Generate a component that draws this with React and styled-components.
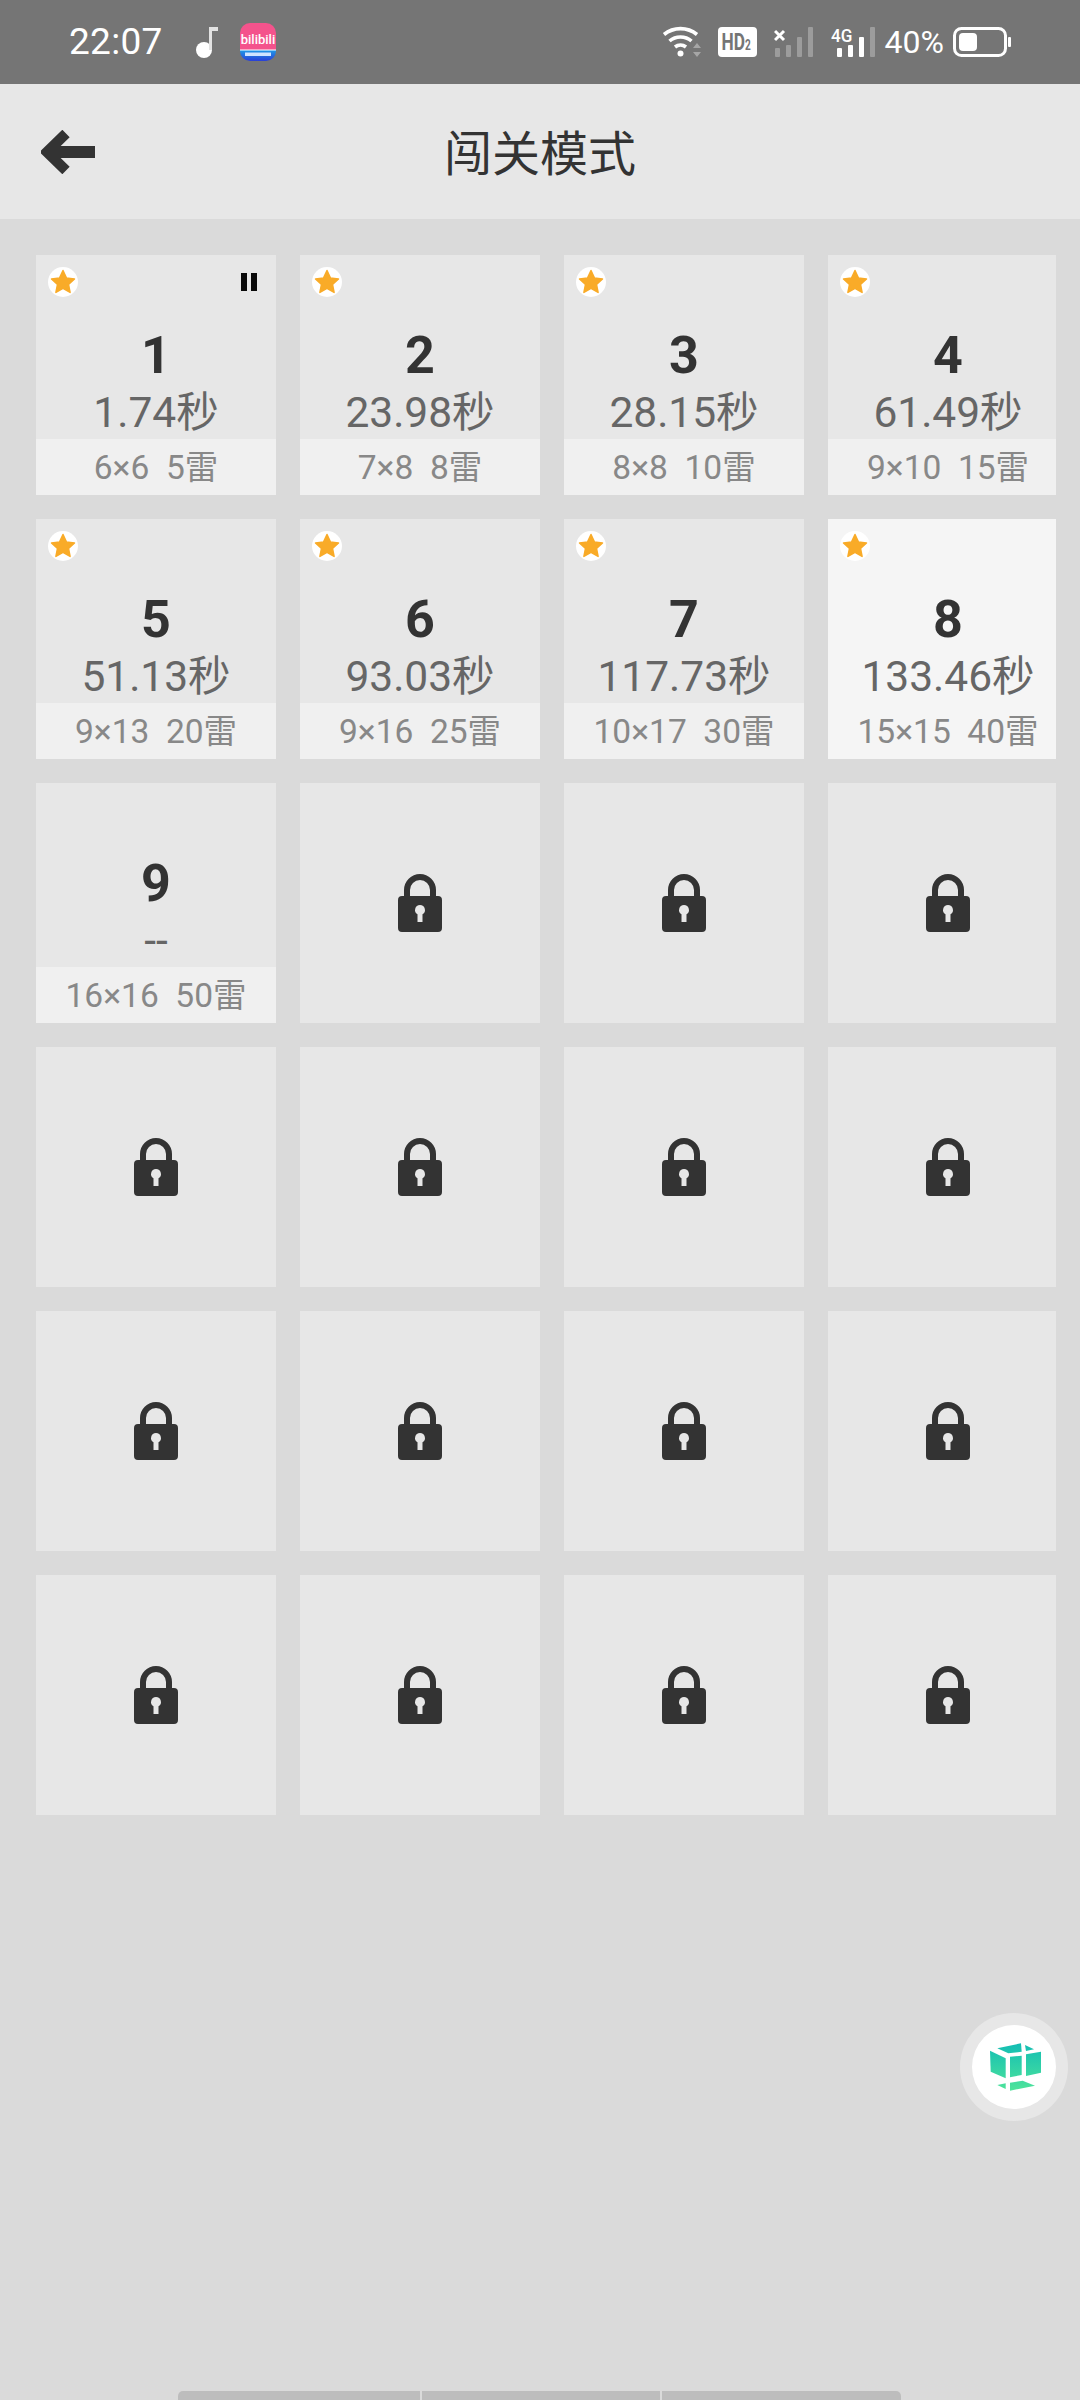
import React from "react";
import styled, { createGlobalStyle } from "styled-components";

const GlobalStyle = createGlobalStyle`
  html, body { margin: 0; padding: 0; background: #dadada; }
  * { box-sizing: border-box; }
  body { font-family: Roboto, "Noto Sans CJK SC", sans-serif; }
`;

const Page = styled.div`
  position: relative;
  width: 1080px;
  height: 2400px;
  display: flex;
  flex-direction: column;
  background: #dadada;
  overflow: hidden;
`;

const StatusBar = styled.div`
  height: 84px;
  flex: none;
  background: #757575;
  color: #fff;
  display: flex;
  align-items: center;
  justify-content: space-between;
  padding: 0 69px 0 69px;
`;

const StatusGroup = styled.div`
  display: flex;
  align-items: center;
`;

const Clock = styled.span`
  font-size: 37px;
  line-height: 84px;
  width: 127px;
  letter-spacing: 0.3px;
`;

const Percent = styled.span`
  font-size: 32px;
  margin: 0 9px 0 10px;
`;

const Header = styled.div`
  height: 135px;
  flex: none;
  background: #e7e7e7;
  display: grid;
  grid-template-columns: 1fr auto 1fr;
  align-items: center;
  padding: 0 41px;
`;

const Title = styled.div`
  font-size: 48px;
  color: #333;
  line-height: 133px;
  height: 135px;
  font-family: "Noto Sans CJK SC", sans-serif;
`;

const Grid = styled.div`
  width: 1020px;
  margin: 36px 0 0 36px;
  display: grid;
  grid-template-columns: repeat(4, 240px);
  grid-auto-rows: 240px;
  gap: 24px;
  overflow: hidden;
`;

const Card = styled.div`
  position: relative;
  width: 240px;
  height: 240px;
  display: flex;
  flex-direction: column;
  align-items: center;
  justify-content: ${(p) => (p.$locked ? "center" : "flex-start")};
  padding-top: ${(p) => (p.$locked ? 0 : 70)}px;
  background: ${(p) => (p.$active ? "#f5f5f5" : "#e7e7e7")};
  text-align: center;
`;

const Badge = styled.div`
  position: absolute;
  left: 12px;
  top: 12px;
  width: 30px;
  height: 30px;
  border-radius: 50%;
  background: #fff;
  display: flex;
  align-items: center;
  justify-content: center;
`;

const Pause = styled.div`
  position: absolute;
  left: 205px;
  top: 18px;
  width: 16px;
  height: 18px;
  border-left: 6px solid #0a0a0a;
  border-right: 6px solid #0a0a0a;
`;

const Num = styled.div`
  font-size: 52px;
  font-weight: 700;
  line-height: 62px;
  color: #333;
`;

const Time = styled.div`
  font-size: 42.5px;
  line-height: 52px;
  height: 52px;
  color: #666;
  white-space: nowrap;
`;

const Band = styled.div`
  height: 56px;
  width: 100%;
  background: ${(p) => (p.$active ? "#f5f5f5" : "#f0f0f0")};
  color: #888;
  font-size: 33.5px;
  line-height: 58px;
  white-space: pre;
`;

const FloatButton = styled.div`
  position: absolute;
  left: 960px;
  top: 2013px;
  width: 108px;
  height: 108px;
  border-radius: 50%;
  background: #e7e7e7;
  display: flex;
  align-items: center;
  justify-content: center;
`;

const FloatInner = styled.div`
  width: 84px;
  height: 84px;
  border-radius: 50%;
  background: #fff;
  display: flex;
  align-items: center;
  justify-content: center;
`;

const HomeBar = styled.div`
  margin: auto 0 0 178px;
  width: 723px;
  height: 9px;
  flex: none;
  display: grid;
  grid-template-columns: 242px 238px 1fr;
  gap: 2px;
  border-radius: 5px 5px 0 0;
  overflow: hidden;
`;

const HomeSegment = styled.div`
  background: #bdbdbd;
`;

const Spaced = styled.svg`
  display: block;
  flex: none;
  margin-left: ${(p) => p.$ml || 0}px;
`;

const levels = [
  { n: 1, time: "1.74秒", info: "6×6  5雷", star: true, paused: true },
  { n: 2, time: "23.98秒", info: "7×8  8雷", star: true },
  { n: 3, time: "28.15秒", info: "8×8  10雷", star: true },
  { n: 4, time: "61.49秒", info: "9×10  15雷", star: true },
  { n: 5, time: "51.13秒", info: "9×13  20雷", star: true },
  { n: 6, time: "93.03秒", info: "9×16  25雷", star: true },
  { n: 7, time: "117.73秒", info: "10×17  30雷", star: true },
  { n: 8, time: "133.46秒", info: "15×15  40雷", star: true, active: true },
  { n: 9, time: "--", info: "16×16  50雷" },
];

const Star = () => (
  <svg width="26" height="26" viewBox="0 0 26 26">
    <path
      d="M13 1.5l3.4 7.4 8.1 1-6 5.5 1.6 8-7.1-4-7.1 4 1.6-8-6-5.5 8.1-1z"
      fill="#f9ab28"
      stroke="#f9ab28"
      strokeWidth="1.5"
      strokeLinejoin="round"
    />
  </svg>
);

const Lock = () => (
  <svg width="44" height="58" viewBox="0 0 44 58">
    <path
      d="M9 26V16a13 13 0 0 1 26 0V26"
      fill="none"
      stroke="#333"
      strokeWidth="6"
    />
    <path
      fillRule="evenodd"
      fill="#333"
      d="M4 22h36a4 4 0 0 1 4 4v28a4 4 0 0 1-4 4H4a4 4 0 0 1-4-4V26a4 4 0 0 1 4-4zM22 31a5 5 0 0 0-2.5 9.3V48h5v-7.700A5 5 0 0 0 22 31z"
    />
  </svg>
);

const BackArrow = () => (
  <svg width="54" height="44" viewBox="0 0 54 44">
    <path d="M25 3.5L6 22l19 18.5" fill="none" stroke="#333" strokeWidth="10.5" />
    <path d="M6 16h48v12H6z" fill="#333" />
  </svg>
);

const Note = () => (
  <Spaced width="22" height="32" viewBox="0 0 22 32">
    <circle cx="8" cy="24" r="8" fill="#fff" />
    <path d="M13 24V1h9v4h-6v19z" fill="#e2e2e2" />
  </Spaced>
);

const Bili = () => (
  <Spaced $ml={22} width="36" height="38" viewBox="0 0 36 38">
    <defs>
      <clipPath id="bili-clip">
        <rect width="36" height="38" rx="10" />
      </clipPath>
      <linearGradient id="bili-blue" x1="0" y1="0" x2="0" y2="1">
        <stop offset="0" stopColor="#1e9be8" />
        <stop offset="1" stopColor="#2a3fd6" />
      </linearGradient>
    </defs>
    <g clipPath="url(#bili-clip)">
      <rect width="36" height="27" fill="#f4538c" />
      <rect y="27" width="36" height="11" fill="url(#bili-blue)" />
      <rect y="26.5" width="36" height="1" fill="#fff" />
      <text x="18" y="21" textAnchor="middle" fontSize="13" fontWeight="500" fill="#fff" fontFamily="Roboto, sans-serif">
        bilibili
      </text>
      <rect x="5" y="29.500" width="26" height="3.500" fill="#cfe4ff" />
    </g>
  </Spaced>
);

const Wifi = () => (
  <Spaced width="40" height="32" viewBox="0 0 40 32">
    <path d="M2 8.5a26 26 0 0 1 33 0" fill="none" stroke="#fff" strokeWidth="3.6" />
    <path d="M7.5 15a17 17 0 0 1 22 0" fill="none" stroke="#fff" strokeWidth="3.6" />
    <path d="M13 21a9 9 0 0 1 11 0" fill="none" stroke="#fff" strokeWidth="3.6" />
    <circle cx="18.5" cy="27.5" r="3" fill="#fff" />
    <path d="M35 17l4 5h-8zM35 31l-4-5h8z" fill="#a6a6a6" />
  </Spaced>
);

const HdBox = () => (
  <Spaced $ml={16} width="40" height="30" viewBox="0 0 40 30">
    <rect width="39" height="30" rx="4" fill="#fff" />
    <text transform="scale(0.72 1)" x="5" y="23.5" fontSize="24" fontWeight="700" fill="#757575" fontFamily="Roboto, sans-serif">
      HD<tspan fontSize="14">2</tspan>
    </text>
  </Spaced>
);

const SignalBars = ({ lit }) => (
  <>
    {[
      { x: 1, h: 9 },
      { x: 12, h: 12 },
      { x: 23, h: 20 },
      { x: 34, h: 30 },
    ].map((b, i) => (
      <rect
        key={b.x}
        x={b.x}
        y={30 - b.h}
        width="5"
        height={b.h}
        rx="1"
        fill={i < lit ? "#fff" : "#9c9c9c"}
      />
    ))}
  </>
);

const SimOff = () => (
  <Spaced $ml={16} width="40" height="30" viewBox="0 0 40 30">
    <path d="M1 5l9 9M10 5l-9 9" stroke="#fff" strokeWidth="3" transform="translate(0 -1)" />
    <SignalBars lit={0} />
  </Spaced>
);

const SimOn = () => (
  <Spaced $ml={17} width="44" height="36" viewBox="0 -3 44 36">
    <text transform="scale(0.9 1)" x="0" y="15" fontSize="19" fontWeight="500" fill="#fff" fontFamily="Roboto, sans-serif">
      4G
    </text>
    <g transform="translate(5 0)">
      <SignalBars lit={3} />
    </g>
  </Spaced>
);

const Battery = () => (
  <Spaced width="58" height="30" viewBox="0 0 58 30">
    <rect x="1.5" y="1.5" width="51" height="27" rx="7" fill="none" stroke="#fff" strokeWidth="3" />
    <rect x="6" y="6" width="18" height="18" rx="4" fill="#fff" />
    <rect x="55" y="10" width="3" height="10" rx="1" fill="#fff" />
  </Spaced>
);

const Cube = () => (
  <svg width="56" height="56" viewBox="0 0 56 56">
    <defs>
      <linearGradient id="cube-fill" gradientUnits="userSpaceOnUse" x1="0" y1="4" x2="0" y2="52">
        <stop offset="0" stopColor="#12bdb4" />
        <stop offset="1" stopColor="#4fe49a" />
      </linearGradient>
    </defs>
    <g fill="url(#cube-fill)">
      <path d="M11.3 9.3L35 4.3l.7 8.4-13.4 1.600z" />
      <path d="M39 6l9 4.3-8 1.700z" />
      <path d="M4 11.7l15.7 7.600v20L4.700 32.700z" />
      <path d="M24 17.7l11.7-1V36L24 38.300z" />
      <path d="M40 15.3l15-2.600v21L40 37z" />
      <path d="M11.3 46l8.400-1.700V50z" />
      <path d="M24 43.7l12.700-2L49 46.700 24 51.700z" />
    </g>
  </svg>
);

const LockedCard = () => (
  <Card $locked>
    <Lock />
  </Card>
);

const App = () => {
  return (
    <Page>
      <GlobalStyle />
      <StatusBar>
        <StatusGroup>
          <Clock>22:07</Clock>
          <Note />
          <Bili />
        </StatusGroup>
        <StatusGroup>
          <Wifi />
          <HdBox />
          <SimOff />
          <SimOn />
          <Percent>40%</Percent>
          <Battery />
        </StatusGroup>
      </StatusBar>
      <Header>
        <BackArrow />
        <Title>闯关模式</Title>
      </Header>
      <Grid>
        {levels.map((l) => (
          <Card key={l.n} $active={l.active}>
            {l.star && (
              <Badge>
                <Star />
              </Badge>
            )}
            {l.paused && <Pause />}
            <Num>{l.n}</Num>
            <Time>{l.time}</Time>
            <Band $active={l.active}>{l.info}</Band>
          </Card>
        ))}
        {Array.from({ length: 15 }, (_, i) => (
          <LockedCard key={i} />
        ))}
      </Grid>
      <FloatButton>
        <FloatInner>
          <Cube />
        </FloatInner>
      </FloatButton>
      <HomeBar>
        <HomeSegment />
        <HomeSegment />
        <HomeSegment />
      </HomeBar>
    </Page>
  );
};

export default App;
